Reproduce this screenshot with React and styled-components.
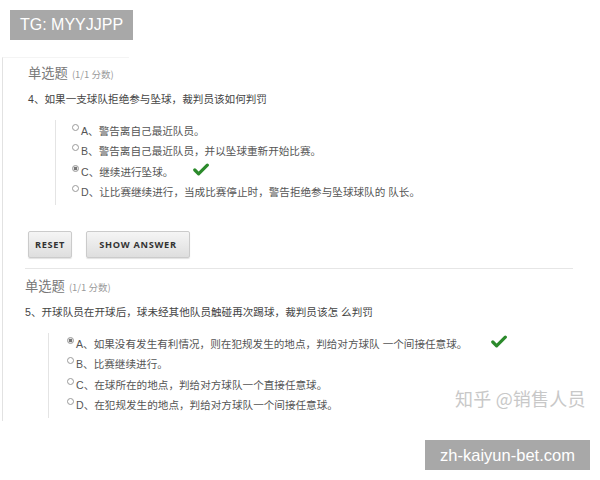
import React from 'react';
import styled, { createGlobalStyle } from 'styled-components';

const GlobalStyle = createGlobalStyle`
  html, body {
    margin: 0;
    padding: 0;
    background: #ffffff;
  }
  body {
    font-family: "Liberation Sans", "Noto Sans CJK SC", sans-serif;
  }
`;

const Page = styled.div`
  position: relative;
  width: 600px;
  height: 480px;
  overflow: hidden;
  background: #fff;
`;

const TopBadge = styled.div`
  display: inline-block;
  margin: 10px 0 0 10px;
  height: 30px;
  line-height: 30px;
  padding: 0 10px;
  background: #a8a8a8;
  color: #fff;
  font-family: "Liberation Sans", Arial, sans-serif;
  font-size: 16px;
`;

const Card = styled.div`
  margin: 17px 0 0 2px;
  height: 363px;
  border-left: 1px solid #e2e2e2;
  border-top: 1px solid #f4f4f4;
  width: 126px;
  overflow: visible;
`;

const Section = styled.div`
  width: 548px;
  padding-left: ${p => p.$left}px;
  padding-top: ${p => p.$top}px;
`;

const Heading = styled.div`
  height: 20px;
  line-height: 20px;
  color: #777;
  font-size: 13.3px;
  font-family: "Noto Sans CJK SC", sans-serif;
  white-space: nowrap;
`;

const Score = styled.span`
  margin-left: 4px;
  color: #9a9a9a;
  font-size: 9.5px;
`;

const Question = styled.div`
  margin-top: 6px;
  height: 20px;
  line-height: 20px;
  color: #444;
  font-size: 10.6px;
  white-space: nowrap;
`;

const OptionList = styled.div`
  margin: 11px 0 0 ${p => p.$ml}px;
  padding: 0 0 3px ${p => p.$pl}px;
  border-left: 1px solid #e4e4e4;
`;

const Option = styled.div`
  display: flex;
  align-items: center;
  height: 20.5px;
  color: #555;
  font-size: 10.6px;
  white-space: nowrap;
`;

const Radio = styled.span`
  position: relative;
  top: -3px;
  width: 7px;
  height: 7px;
  margin-right: 2px;
  border: 1px solid #9a9a9a;
  border-radius: 50%;
  box-sizing: border-box;
  background: ${p => (p.$checked ? 'radial-gradient(circle, #777 0 40%, #e6e6e6 55%)' : '#fff')};
  flex: none;
`;

const CheckWrap = styled.span`
  display: inline-flex;
  margin-left: ${p => p.$gap}px;
  position: relative;
  top: -2px;
`;

const Check = ({ gap }) => (
  <CheckWrap $gap={gap}>
    <svg width="16" height="13" viewBox="0 0 16 13">
      <path d="M1.8 7 L5.6 10.8 L14.3 2.2" fill="none" stroke="#2b8a2b" strokeWidth="3.2" strokeLinecap="round" strokeLinejoin="round" />
    </svg>
  </CheckWrap>
);

const ButtonRow = styled.div`
  display: flex;
  gap: 14px;
  margin-top: 26px;
`;

const Button = styled.button`
  height: 27px;
  width: ${p => p.$w}px;
  padding: 0;
  border: 1px solid #cbcbcb;
  border-radius: 2px;
  background: linear-gradient(#f5f5f5, #dedede);
  box-shadow: 0 1px 1px rgba(0, 0, 0, 0.12);
  color: #333;
  font-family: "Open Sans", "Liberation Sans", sans-serif;
  font-weight: 700;
  font-size: 9.2px;
  letter-spacing: 0.7px;
`;

const Divider = styled.div`
  margin: 10px 0 0 -3px;
  width: 548px;
  height: 1px;
  background: #e6e6e6;
`;

const Watermark = styled.div`
  position: absolute;
  left: 455px;
  top: 385px;
  color: #c8c8c8;
  font-family: "Noto Sans CJK SC", sans-serif;
  font-size: 18px;
  letter-spacing: 0.2px;
  white-space: nowrap;
`;

const FooterBadge = styled.div`
  position: absolute;
  left: 425px;
  top: 440px;
  width: 165px;
  height: 30px;
  line-height: 30px;
  text-align: center;
  background: #a8a8a8;
  color: #fff;
  font-family: "Liberation Sans", Arial, sans-serif;
  font-size: 16.5px;
`;

const q4 = [
  { text: 'A、警告离自己最近队员。' },
  { text: 'B、警告离自己最近队员，并以坠球重新开始比赛。' },
  { text: 'C、继续进行坠球。', checked: true, gap: 20 },
  { text: 'D、让比赛继续进行，当成比赛停止时，警告拒绝参与坠球球队的 队长。' },
];

const q5 = [
  { text: 'A、如果没有发生有利情况，则在犯规发生的地点，判给对方球队 一个间接任意球。', checked: true, gap: 24 },
  { text: 'B、比赛继续进行。' },
  { text: 'C、在球所在的地点，判给对方球队一个直接任意球。' },
  { text: 'D、在犯规发生的地点，判给对方球队一个间接任意球。' },
];

const Options = ({ items, ml, pl }) => (
  <OptionList $ml={ml} $pl={pl}>
    {items.map(o => (
      <Option key={o.text}>
        <Radio $checked={o.checked} />
        {o.text}
        {o.checked && <Check gap={o.gap} />}
      </Option>
    ))}
  </OptionList>
);

export default function App() {
  return (
    <Page>
      <GlobalStyle />
      <TopBadge>TG: MYYJJPP</TopBadge>
      <Card>
        <Section $left={25} $top={5}>
          <Heading>单选题<Score>(1/1 分数)</Score></Heading>
          <Question>4、如果一支球队拒绝参与坠球，裁判员该如何判罚</Question>
          <Options items={q4} ml={27} pl={16} />
          <ButtonRow>
            <Button $w={44}>RESET</Button>
            <Button $w={104}>SHOW ANSWER</Button>
          </ButtonRow>
          <Divider />
        </Section>
        <Section $left={22} $top={7}>
          <Heading>单选题<Score>(1/1 分数)</Score></Heading>
          <Question>5、开球队员在开球后，球未经其他队员触碰再次踢球，裁判员该怎 么判罚</Question>
          <Options items={q5} ml={23} pl={18} />
        </Section>
      </Card>
      <Watermark>知乎 @销售人员</Watermark>
      <FooterBadge>zh-kaiyun-bet.com</FooterBadge>
    </Page>
  );
}
